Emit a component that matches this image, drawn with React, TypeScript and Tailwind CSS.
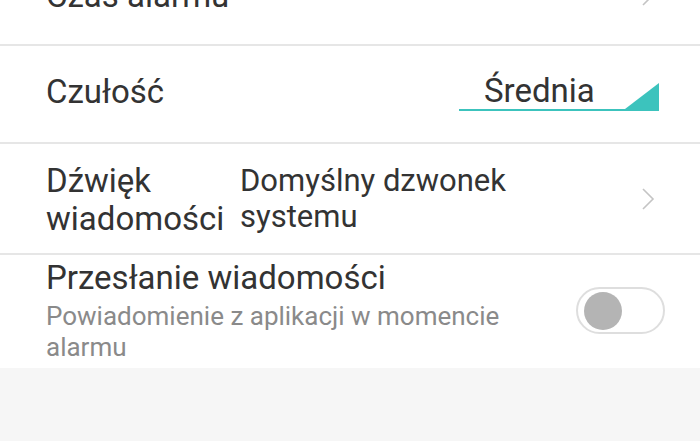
import React from 'react';

function Chevron() {
  return (
    <svg width="14" height="24" viewBox="0 0 14 24" fill="none" stroke="#c4c4c4" strokeWidth="1.6">
      <path d="M2 2l10 10-10 10" />
    </svg>
  );
}

function Divider() {
  return <div className="h-[2px] bg-[#e6e6e6]" />;
}

export default function App() {
  return (
    <div className="w-[700px] h-[441px] overflow-hidden bg-[#f6f6f6] font-['Roboto',sans-serif] text-[#333333]">
      <div className="bg-white">
        {/* Czas alarmu (cut off at the top) */}
        <div className="mt-[-54px] h-[98px] flex items-center pl-[46px] pr-[45px]">
          <span className="flex-1 text-[33px] leading-none">Czas alarmu</span>
          <Chevron />
        </div>
        <Divider />

        {/* Czułość */}
        <div className="h-[96px] flex items-center pl-[46px] pr-[41px]">
          <span className="flex-1 text-[33px] leading-none mb-[6px]">Czułość</span>
          <div className="relative w-[200px] h-[40px] mt-[-6px] border-b-2 border-[#3cc3bd]">
            <span className="absolute left-[25px] top-[3px] text-[33px] leading-none">Średnia</span>
            <svg className="absolute right-0 bottom-0" width="34" height="26" viewBox="0 0 34 26">
              <polygon points="0,26 34,0 34,26" fill="#3cc3bd" />
            </svg>
          </div>
        </div>
        <Divider />

        {/* Dźwięk wiadomości */}
        <div className="h-[109px] flex items-center pl-[46px] pr-[45px]">
          <span className="w-[194px] text-[33px] leading-[38px] mt-[2px]">Dźwięk<br />wiadomości</span>
          <span className="flex-1 text-[31px] leading-[36px]">Domyślny dzwonek<br />systemu</span>
          <Chevron />
        </div>
        <Divider />

        {/* Przesłanie wiadomości */}
        <div className="h-[113px] flex items-start pl-[46px] pr-[35px]">
          <div className="flex-1 pt-[5px]">
            <div className="text-[33px] leading-[36px]">Przesłanie wiadomości</div>
            <div className="text-[26px] leading-[31px] text-[#8a8a8a] mt-[5px] w-[480px]">
              Powiadomienie z aplikacji w momencie alarmu
            </div>
          </div>
          <div className="mt-[32px] w-[89px] h-[47px] rounded-full border-2 border-[#dedede] bg-white flex items-center pl-[6px]">
            <div className="w-[38px] h-[38px] rounded-full bg-[#b4b4b4]" />
          </div>
        </div>
      </div>
    </div>
  );
}
